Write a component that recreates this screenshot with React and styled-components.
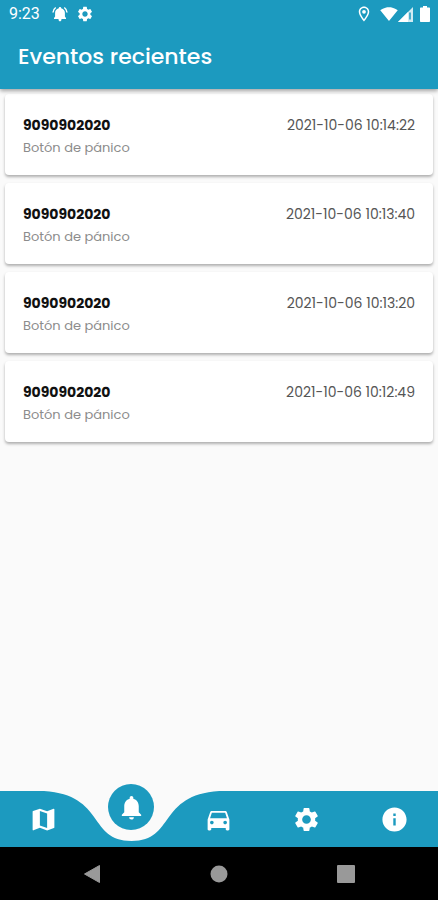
import React, { useState } from 'react';
import styled, { createGlobalStyle } from 'styled-components';
import {
    MdMap,
    MdNotifications,
    MdDirectionsCar,
    MdSettings,
    MdInfo,
    MdOutlineLocationOn,
    MdSignalWifi4Bar,
} from 'react-icons/md';

const EVENTS = [
    { id: '9090902020', type: 'Botón de pánico', date: '2021-10-06 10:14:22' },
    { id: '9090902020', type: 'Botón de pánico', date: '2021-10-06 10:13:40' },
    { id: '9090902020', type: 'Botón de pánico', date: '2021-10-06 10:13:20' },
    { id: '9090902020', type: 'Botón de pánico', date: '2021-10-06 10:12:49' },
];

const TABS = [
    { label: 'Mapa', Icon: MdMap },
    { label: 'Eventos', Icon: MdNotifications },
    { label: 'Vehículos', Icon: MdDirectionsCar },
    { label: 'Ajustes', Icon: MdSettings },
    { label: 'Información', Icon: MdInfo },
];

const RingingBell = () => (
    <svg width='16' height='16' viewBox='0 0 16 16' fill='#fff'>
        <path d='M8 1C8.700 1 9.200 1.500 9.200 2.200C11.600 2.800 12.900 4.600 12.900 6.800V10.500L14 12V13H2V12L3.100 10.500V6.800C3.100 4.600 4.400 2.800 6.800 2.200C6.800 1.500 7.300 1 8 1ZM6.500 13H9.500C9.500 14.700 8.900 15.300 8 15.300S6.500 14.700 6.500 13Z' />
        <path d='M1 6.500C1.100 4.400 2 2.700 3.700 1.500M15 6.500C14.900 4.400 14 2.700 12.300 1.500' fill='none' stroke='#fff' strokeWidth='1.500' />
    </svg>
);

const CellSignal = () => (
    <svg width='15' height='15' viewBox='0 0 15 15'>
        <path d='M15 0V15H0Z' fill='#fff' fillOpacity='.8' />
        <path d='M10 5V15H0Z' fill='#fff' />
        <path d='M12 5.500V12.500' stroke='#1c9abf' strokeWidth='1.500' />
    </svg>
);

const Battery = () => (
    <svg width='10' height='16' viewBox='0 0 10 16'>
        <path d='M3 0H7V1.500H9C9.600 1.500 10 1.900 10 2.500V15C10 15.600 9.600 16 9 16H1C.4 16 0 15.600 0 15V2.500C0 1.900.4 1.500 1 1.500H3Z' fill='#fff' />
    </svg>
);

const App = () => {
    const [active, setActive] = useState(1)

    return (
        <Page>
            <GlobalStyle />
            <Header>
                <StatusBar>
                    <Clock>9:23</Clock>
                    <RingingBell />
                    <MdSettings size={18} />
                    <StatusRight>
                        <MdOutlineLocationOn size={18} />
                        <SignalGroup>
                            <MdSignalWifi4Bar size={18} />
                            <CellSignal />
                        </SignalGroup>
                        <Battery />
                    </StatusRight>
                </StatusBar>
                <Title>Eventos recientes</Title>
            </Header>
            <EventList>
                {
                    EVENTS.map((item, index) => {
                        return (
                            <EventCard key={index}>
                                <div>
                                    <EventId>{item.id}</EventId>
                                    <EventType>{item.type}</EventType>
                                </div>
                                <EventDate>{item.date}</EventDate>
                            </EventCard>
                        )
                    })
                }
            </EventList>
            <TabBar>
                {
                    TABS.map(({ label, Icon }, index) => {
                        const isActive = index === active
                        return (
                            <TabCell key={label}>
                                {isActive &&
                                    <Notch viewBox='0 0 176 50' preserveAspectRatio='none'>
                                        <path d='M0 -1V0C62 4 44 50 88 50S114 4 176 0V-1Z' fill='#fafafa' />
                                    </Notch>
                                }
                                <TabButton $active={isActive} aria-label={label} onClick={e => setActive(index)}>
                                    <Icon size={29} />
                                </TabButton>
                            </TabCell>
                        )
                    })
                }
            </TabBar>
            <SystemBar>
                <SystemButton aria-label='Atrás'>
                    <svg width='18' height='20' viewBox='0 0 18 20'>
                        <path d='M16.500 1.500V18.500L1.500 10Z' fill='#999' stroke='#999' strokeWidth='1' strokeLinejoin='round' />
                    </svg>
                </SystemButton>
                <SystemButton aria-label='Inicio'>
                    <svg width='18' height='18' viewBox='0 0 18 18'>
                        <circle cx='9' cy='9' r='8.500' fill='#999' />
                    </svg>
                </SystemButton>
                <SystemButton aria-label='Recientes'>
                    <svg width='18' height='18' viewBox='0 0 18 18'>
                        <rect width='18' height='18' rx='1' fill='#999' />
                    </svg>
                </SystemButton>
            </SystemBar>
        </Page>
    )
};

export default App;

const GlobalStyle = createGlobalStyle`
    body{
        margin: 0;
        background-color: #fafafa;
        font-family: Poppins, Inter, sans-serif;
    }
    *{
        box-sizing: border-box;
    }
    svg{
        display: block;
        flex-shrink: 0;
    }
    button{
        border: 0;
        padding: 0;
        background: none;
        color: inherit;
        cursor: pointer;
    }
`;

const Page = styled.div`
    display: flex;
    flex-direction: column;
    min-height: 100vh;
`;

const Header = styled.header`
    background-color: #1c9abf;
    color: #fff;
    box-shadow: 0 2px 4px rgba(0,0,0,.35);
    z-index: 1;
`;
const StatusBar = styled.div`
    display: flex;
    align-items: center;
    gap: 8px;
    height: 28px;
    padding: 0 8px 0 9px;
`;
const Clock = styled.span`
    margin-right: 4px;
    font-family: Roboto, sans-serif;
    font-size: 16px;
    line-height: 28px;
`;
const StatusRight = styled.div`
    display: flex;
    align-items: center;
    gap: 7px;
    margin-left: auto;
`;
const SignalGroup = styled.div`
    display: flex;
    align-items: center;
`;
const Title = styled.h1`
    margin: 0;
    padding: 13px 18px 16px;
    font-size: 22px;
    line-height: 32px;
    font-weight: 500;
`;

const EventList = styled.ul`
    flex: 1;
    display: flex;
    flex-direction: column;
    gap: 8px;
    margin: 0;
    padding: 5px 5px 24px;
    list-style: none;
`;
const EventCard = styled.li`
    display: flex;
    justify-content: space-between;
    padding: 20px 18px 16px;
    background-color: #fff;
    border-radius: 4px;
    box-shadow: 0 2px 3px rgba(0,0,0,.3);
`;
const EventId = styled.div`
    font-size: 14px;
    line-height: 22px;
    font-weight: 700;
    color: #111;
`;
const EventType = styled.div`
    font-size: 13px;
    line-height: 23px;
    font-weight: 400;
    color: #8c8c8c;
`;
const EventDate = styled.time`
    font-size: 14px;
    line-height: 22px;
    font-weight: 400;
    color: #555;
`;

const TabBar = styled.nav`
    display: flex;
    height: 56px;
    background-color: #1c9abf;
    color: #fff;
`;
const TabCell = styled.div`
    position: relative;
    flex: 1;
    display: flex;
    justify-content: center;
`;
const Notch = styled.svg`
    position: absolute;
    top: 0;
    left: -50%;
    width: 200%;
    height: 50px;
    overflow: visible;
    pointer-events: none;
`;
const TabButton = styled.button`
    position: relative;
    display: flex;
    align-items: center;
    justify-content: center;
    width: ${props => props.$active ? '46px' : '100%'};
    height: ${props => props.$active ? '46px' : '56px'};
    margin-top: ${props => props.$active ? '-7px' : '0'};
    border-radius: ${props => props.$active ? '50%' : '0'};
    background-color: ${props => props.$active ? '#1c9abf' : 'transparent'};
`;

const SystemBar = styled.div`
    display: grid;
    grid-template-columns: repeat(3, 1fr);
    align-items: center;
    justify-items: center;
    height: 53px;
    padding: 0 28px;
    background-color: #000;
`;
const SystemButton = styled.button`
    display: flex;
    align-items: center;
    justify-content: center;
    width: 48px;
    height: 48px;
`;
